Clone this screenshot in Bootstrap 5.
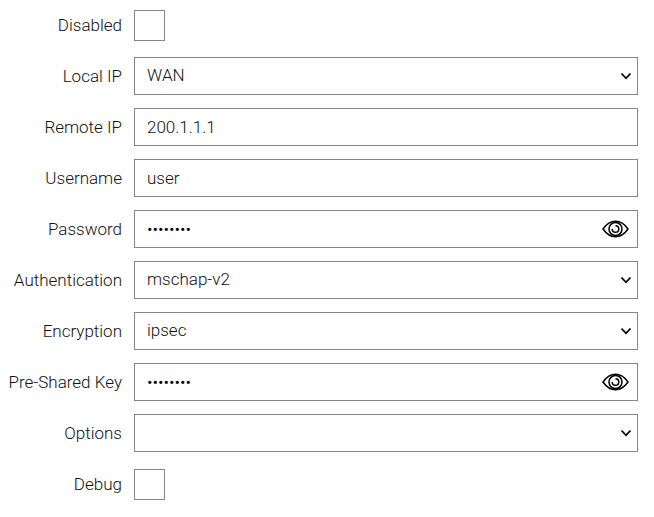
<!DOCTYPE html>
<html lang="en">
<head>
<meta charset="utf-8">
<meta name="viewport" content="width=device-width, initial-scale=1">
<title>L2TP client settings</title>
<link href="https://cdn.jsdelivr.net/npm/bootstrap@5.3.0/dist/css/bootstrap.min.css" rel="stylesheet">
<style>
  body { font-family: Roboto, sans-serif; font-weight: 300; font-size: 17px; line-height: 24px; color: #111; background: #fff; }
  .settings { display: grid; grid-auto-rows: 38px; gap: 13px; padding: 6px 16px 12px 0; }
  .setting { display: grid; grid-template-columns: 122px minmax(0, 1fr); column-gap: 12px; align-items: center; }
  .setting > label { text-align: right; white-space: nowrap; }
  .setting .form-control, .setting .form-select {
    height: 38px; padding: 0 12px; border: 1px solid #868686; border-radius: 0;
    font-size: 17px; font-weight: 300; color: #111; background-color: #fff;
  }
  .setting .form-select {
    background-image: url("data:image/svg+xml,%3Csvg xmlns='http://www.w3.org/2000/svg' viewBox='0 0 12 8'%3E%3Cpath d='M1.5 1.5 6 6.3 10.5 1.5' fill='none' stroke='%23000' stroke-width='1.8'/%3E%3C/svg%3E");
    background-size: 12px 8px; background-position: right 5px center;
  }
  .setting .form-control[type="password"] { padding-right: 44px; color: #000; }
  .setting .form-check-input { width: 31px; height: 31px; margin: 0; border: 1px solid #868686; border-radius: 0; }
  .reveal { position: absolute; top: 0; right: 0; height: 38px; padding: 0 9px; border: 0; background: none; line-height: 0; color: #000; }
</style>
</head>
<body>
<form class="settings">
  <div class="setting"><label for="disabled">Disabled</label><input class="form-check-input" type="checkbox" id="disabled"></div>
  <div class="setting"><label for="localip">Local IP</label><select class="form-select" id="localip"><option>WAN</option></select></div>
  <div class="setting"><label for="remoteip">Remote IP</label><input class="form-control" type="text" id="remoteip" value="200.1.1.1"></div>
  <div class="setting"><label for="username">Username</label><input class="form-control" type="text" id="username" value="user"></div>
  <div class="setting"><label for="password">Password</label>
    <div class="position-relative"><input class="form-control" type="password" id="password" value="password">
      <button class="reveal" type="button" aria-label="Show password"><svg width="27" height="20" viewBox="0 0 27 20" fill="none" stroke="currentColor" stroke-width="1.5"><path d="M1 10C4.500 5 8.500 2.300 13.500 2.300S22.500 5 26 10C22.500 15 18.500 17.700 13.500 17.700S4.500 15 1 10Z"/><circle cx="13.500" cy="10" r="6.500"/><path d="M13.500 6.700A3.300 3.300 0 1 1 10.200 10"/></svg></button></div></div>
  <div class="setting"><label for="auth">Authentication</label><select class="form-select" id="auth"><option>mschap-v2</option></select></div>
  <div class="setting"><label for="encryption">Encryption</label><select class="form-select" id="encryption"><option>ipsec</option></select></div>
  <div class="setting"><label for="psk">Pre-Shared Key</label>
    <div class="position-relative"><input class="form-control" type="password" id="psk" value="password">
      <button class="reveal" type="button" aria-label="Show pre-shared key"><svg width="27" height="20" viewBox="0 0 27 20" fill="none" stroke="currentColor" stroke-width="1.5"><path d="M1 10C4.500 5 8.500 2.300 13.500 2.300S22.500 5 26 10C22.500 15 18.500 17.700 13.500 17.700S4.500 15 1 10Z"/><circle cx="13.500" cy="10" r="6.500"/><path d="M13.500 6.700A3.300 3.300 0 1 1 10.200 10"/></svg></button></div></div>
  <div class="setting"><label for="options">Options</label><select class="form-select" id="options"><option></option></select></div>
  <div class="setting"><label for="debug">Debug</label><input class="form-check-input" type="checkbox" id="debug"></div>
</form>
<script src="https://cdn.jsdelivr.net/npm/bootstrap@5.3.0/dist/js/bootstrap.bundle.min.js"></script>
</body>
</html>
